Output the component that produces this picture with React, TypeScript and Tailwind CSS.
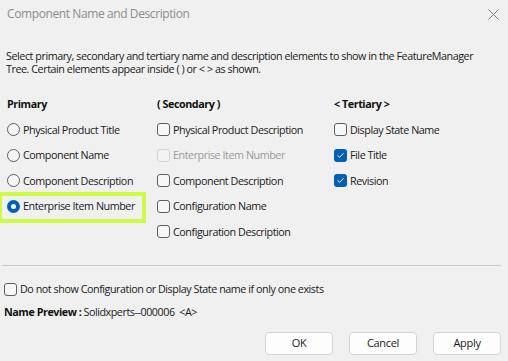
import React from "react";

const FONT = { fontFamily: '"Open Sans", "Noto Sans", sans-serif' };

function Check({ checked = false, disabled = false }: { checked?: boolean; disabled?: boolean }) {
  if (checked) {
    return (
      <span className="w-[13px] h-[13px] rounded-[3px] bg-[#005fb8] flex items-center justify-center shrink-0">
        <svg width="9" height="9" viewBox="0 0 9 9">
          <path d="M1.8 4.6 L3.6 6.3 L7.2 2.6" fill="none" stroke="#ffffff" strokeWidth="1" strokeLinecap="round" strokeLinejoin="round" />
        </svg>
      </span>
    );
  }
  return (
    <span
      className={
        disabled
          ? "w-[13px] h-[13px] rounded-[3px] border border-[#d2d2d2] bg-[#f3f3f3] shrink-0"
          : "w-[13px] h-[13px] rounded-[3px] border border-[#5f5f5f] bg-[#f7f7f7] shrink-0"
      }
    />
  );
}

function Radio({ checked = false }: { checked?: boolean }) {
  if (checked) {
    return (
      <span className="w-[13px] h-[13px] rounded-full bg-[#005fb8] flex items-center justify-center shrink-0">
        <span className="w-[5px] h-[5px] rounded-full bg-white" />
      </span>
    );
  }
  return <span className="w-[13px] h-[13px] rounded-full border border-[#5f5f5f] bg-[#f7f7f7] shrink-0" />;
}

function Row({ children }: { children: React.ReactNode }) {
  return <div className="h-[25.5px] shrink-0 flex items-center">{children}</div>;
}

function Item({ box, label, disabled = false }: { box: React.ReactNode; label: string; disabled?: boolean }) {
  return (
    <Row>
      <div className="flex items-center gap-[3px]">
        {box}
        <span className={disabled ? "text-[#9a9a9a] leading-[16px] whitespace-nowrap" : "text-[#1a1a1a] leading-[16px] whitespace-nowrap"}>{label}</span>
      </div>
    </Row>
  );
}

function Header({ text }: { text: string }) {
  return (
    <Row>
      <span className="font-bold text-[#111] leading-[16px] whitespace-nowrap">{text}</span>
    </Row>
  );
}

function Button({ label }: { label: string }) {
  return (
    <button className="w-[68px] h-[23px] rounded-[4px] border border-[#d3d3d3] bg-[#fdfdfd] text-[11px] tracking-[-0.3px] text-[#1a1a1a] flex items-center justify-center">
      {label}
    </button>
  );
}

export default function App() {
  return (
    <div className="w-[508px] h-[361px] bg-[#f0f0f0] flex flex-col text-[10.75px] tracking-[-0.45px] text-[#1a1a1a] overflow-hidden" style={FONT}>
      <div className="h-[28px] shrink-0 flex items-center justify-between pl-[7px] pr-[9px]">
        <span className="text-[12px] tracking-[-0.4px] text-[#8d8d8d]">Component Name and Description</span>
        <svg width="11" height="11" viewBox="0 0 11 11">
          <path d="M0.5 0.5 L10.5 10.5 M10.5 0.5 L0.5 10.5" stroke="#7a7a7a" strokeWidth="1" />
        </svg>
      </div>

      <div className="mt-[22px] shrink-0 pl-[6px] leading-[13px] whitespace-nowrap">
        <div>Select primary, secondary and tertiary name and description elements to show in the FeatureManager</div>
        <div>Tree. Certain elements appear inside ( ) or &lt; &gt; as shown.</div>
      </div>

      <div className="mt-[15.25px] shrink-0 flex pl-[7px]">
        <div className="w-[150px] flex flex-col">
          <Header text="Primary" />
          <Item box={<Radio />} label="Physical Product Title" />
          <Item box={<Radio />} label="Component Name" />
          <Item box={<Radio />} label="Component Description" />
          <div className="relative">
            <Item box={<Radio checked />} label="Enterprise Item Number" />
            <div className="absolute left-[-9px] top-[-1px] w-[148px] h-[31px] border-[4px] border-[#cdfc45] pointer-events-none" />
          </div>
        </div>
        <div className="w-[177px] flex flex-col">
          <Header text="( Secondary )" />
          <Item box={<Check />} label="Physical Product Description" />
          <Item box={<Check disabled />} label="Enterprise Item Number" disabled />
          <Item box={<Check />} label="Component Description" />
          <Item box={<Check />} label="Configuration Name" />
          <Item box={<Check />} label="Configuration Description" />
        </div>
        <div className="flex-1 flex flex-col">
          <Header text="< Tertiary >" />
          <Item box={<Check />} label="Display State Name" />
          <Item box={<Check checked />} label="File Title" />
          <Item box={<Check checked />} label="Revision" />
        </div>
      </div>

      <div className="mt-[20.75px] shrink-0 ml-[2px] mr-[7px] h-px bg-[#cbcbcb]" />

      <div className="mt-[15px] shrink-0 h-[16px] pl-[4px] flex items-center gap-[3px]">
        <Check />
        <span className="whitespace-nowrap">Do not show Configuration or Display State name if only one exists</span>
      </div>

      <div className="mt-[7px] shrink-0 h-[16px] pl-[4px] flex items-center">
        <span className="font-bold text-[#111] whitespace-nowrap">Name Preview :</span>
        <span className="ml-[2px] whitespace-pre">Solidxperts--000006  &lt;A&gt;</span>
      </div>

      <div className="mt-[12px] shrink-0 flex justify-end gap-[16px] pr-[7px]">
        <Button label="OK" />
        <Button label="Cancel" />
        <Button label="Apply" />
      </div>
    </div>
  );
}
